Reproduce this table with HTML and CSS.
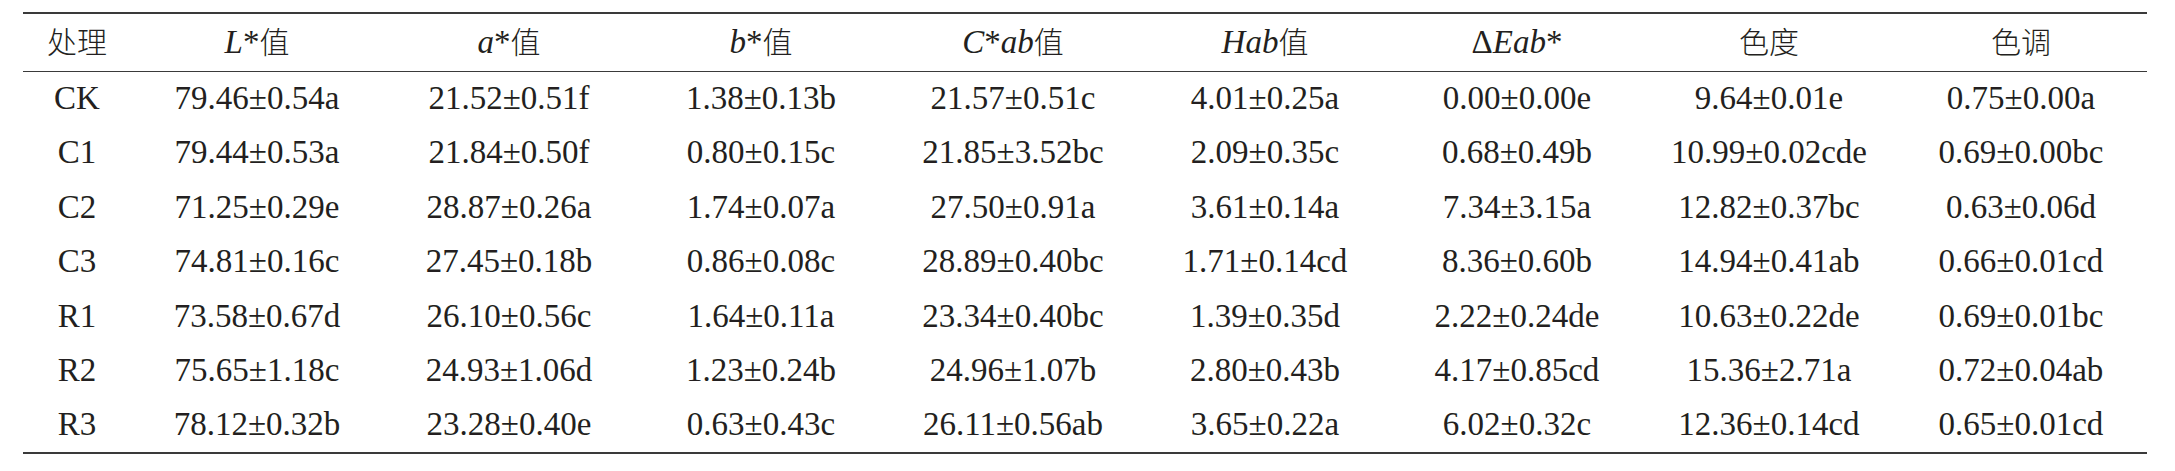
FILE: index.html
```html
<!DOCTYPE html>
<html lang="zh">
<head>
<meta charset="utf-8">
<link rel="stylesheet" href="styles.css">
</head>
<body>
<div class="page">
<table class="data">
<colgroup>
<col class="c-first">
<col class="c-val"><col class="c-val"><col class="c-val"><col class="c-val">
<col class="c-val"><col class="c-val"><col class="c-val"><col class="c-val">
</colgroup>
<thead>
<tr>
<th><span class="cjk">处理</span></th>
<th><i>L</i>*<span class="cjk">值</span></th>
<th><i>a</i>*<span class="cjk">值</span></th>
<th><i>b</i>*<span class="cjk">值</span></th>
<th><i>C</i>*<i>ab</i><span class="cjk">值</span></th>
<th><i>Hab</i><span class="cjk">值</span></th>
<th>Δ<i>Eab</i>*</th>
<th><span class="cjk">色度</span></th>
<th><span class="cjk">色调</span></th>
</tr>
</thead>
<tbody>
<tr><td>CK</td><td>79.46±0.54a</td><td>21.52±0.51f</td><td>1.38±0.13b</td><td>21.57±0.51c</td><td>4.01±0.25a</td><td>0.00±0.00e</td><td>9.64±0.01e</td><td>0.75±0.00a</td></tr>
<tr><td>C1</td><td>79.44±0.53a</td><td>21.84±0.50f</td><td>0.80±0.15c</td><td>21.85±3.52bc</td><td>2.09±0.35c</td><td>0.68±0.49b</td><td>10.99±0.02cde</td><td>0.69±0.00bc</td></tr>
<tr><td>C2</td><td>71.25±0.29e</td><td>28.87±0.26a</td><td>1.74±0.07a</td><td>27.50±0.91a</td><td>3.61±0.14a</td><td>7.34±3.15a</td><td>12.82±0.37bc</td><td>0.63±0.06d</td></tr>
<tr><td>C3</td><td>74.81±0.16c</td><td>27.45±0.18b</td><td>0.86±0.08c</td><td>28.89±0.40bc</td><td>1.71±0.14cd</td><td>8.36±0.60b</td><td>14.94±0.41ab</td><td>0.66±0.01cd</td></tr>
<tr><td>R1</td><td>73.58±0.67d</td><td>26.10±0.56c</td><td>1.64±0.11a</td><td>23.34±0.40bc</td><td>1.39±0.35d</td><td>2.22±0.24de</td><td>10.63±0.22de</td><td>0.69±0.01bc</td></tr>
<tr><td>R2</td><td>75.65±1.18c</td><td>24.93±1.06d</td><td>1.23±0.24b</td><td>24.96±1.07b</td><td>2.80±0.43b</td><td>4.17±0.85cd</td><td>15.36±2.71a</td><td>0.72±0.04ab</td></tr>
<tr><td>R3</td><td>78.12±0.32b</td><td>23.28±0.40e</td><td>0.63±0.43c</td><td>26.11±0.56ab</td><td>3.65±0.22a</td><td>6.02±0.32c</td><td>12.36±0.14cd</td><td>0.65±0.01cd</td></tr>
</tbody>
</table>
</div>
</body>
</html>
```

FILE: styles.css
```css
html, body {
  margin: 0;
  padding: 0;
  background: #ffffff;
}

.page {
  padding: 12px 0 0 23px;
}

.data {
  width: 2124px;
  border-collapse: collapse;
  table-layout: fixed;
  font-family: "Liberation Serif", "Times New Roman", "Noto Sans CJK SC", serif;
  font-size: 33px;
  color: #231f20;
  border-top: 2px solid #3a3a3a;
  border-bottom: 2px solid #3a3a3a;
}

.c-first { width: 108px; }
.c-val { width: 252px; }

.data th,
.data td {
  padding: 0;
  text-align: center;
  white-space: nowrap;
  font-weight: normal;
  line-height: 1;
}

.data thead tr {
  height: 58px;
  border-bottom: 1px solid #3a3a3a;
}

.data tbody tr {
  height: 54.5px;
}

.cjk {
  font-family: "Noto Sans CJK SC", sans-serif;
  font-size: 30px;
  font-weight: 300;
}
```
